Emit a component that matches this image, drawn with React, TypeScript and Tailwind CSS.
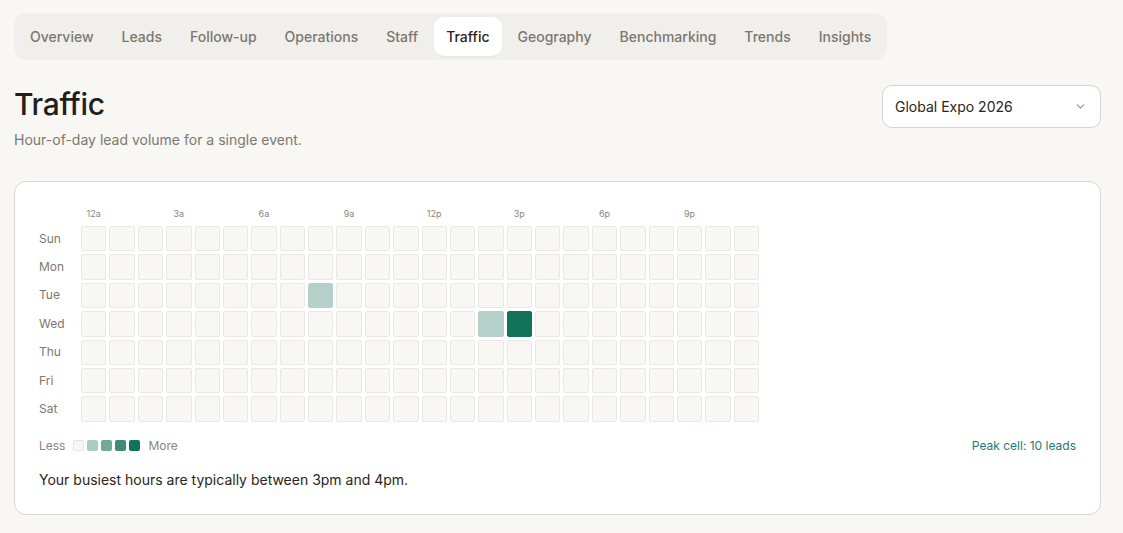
import React from "react";

const tabs = ["Overview", "Leads", "Follow-up", "Operations", "Staff", "Traffic", "Geography", "Benchmarking", "Trends", "Insights"];
const days = ["Sun", "Mon", "Tue", "Wed", "Thu", "Fri", "Sat"];
const hourLabels: Record<number, string> = { 0: "12a", 3: "3a", 6: "6a", 9: "9a", 12: "12p", 15: "3p", 18: "6p", 21: "9p" };

const cellColor = (d: number, h: number): string | null => {
  if (d === 2 && h === 8) return "bg-[#b4d0c9] border-[#b4d0c9]";
  if (d === 3 && h === 14) return "bg-[#b4d0c9] border-[#b4d0c9]";
  if (d === 3 && h === 15) return "bg-[#12735a] border-[#12735a]";
  return null;
};

export default function App() {
  return (
    <div className="min-h-[533px] bg-[#f8f7f4] pl-[14px] pr-[22px] pt-[13px] pb-4 text-[#2a2520]" style={{ fontFamily: "Inter, 'Noto Sans', sans-serif" }}>
      <div className="inline-flex gap-1 rounded-xl bg-[#f0efec] p-1">
        {tabs.map((t) => (
          <div
            key={t}
            className={
              "flex h-[39px] items-center rounded-[10px] px-3 text-[14px] font-medium " +
              (t === "Traffic" ? "bg-white text-[#2a2520] shadow-[0_1px_2px_rgba(0,0,0,0.04)]" : "text-[#7c776f]")
            }
          >
            {t}
          </div>
        ))}
      </div>

      <div className="mt-[26px] flex items-start justify-between">
        <div>
          <h1 className="text-[30px] font-medium leading-[36px] tracking-[-0.01em] text-[#221e1a]">Traffic</h1>
          <p className="mt-2 text-[14px] leading-5 text-[#7c776f]">Hour-of-day lead volume for a single event.</p>
        </div>
        <div className="-mt-px flex h-[43px] w-[219px] items-center justify-between rounded-[10px] border border-[#d6d3cd] bg-white pl-3 pr-[13px] text-[14px] text-[#2a2520]">
          <span>Global Expo 2026</span>
          <svg width="13" height="13" viewBox="0 0 24 24" fill="none" stroke="#9a958e" strokeWidth="2" strokeLinecap="round" strokeLinejoin="round">
            <path d="m6 9 6 6 6-6" />
          </svg>
        </div>
      </div>

      <div className="mt-[31px] rounded-xl border border-[#d9d6d0] bg-white px-6 pb-6 pt-6">
        <div className="w-[720px]">
          <div className="grid grid-cols-[39px_repeat(24,minmax(0,1fr))] gap-x-[3px]">
            <div />
            {Array.from({ length: 24 }).map((_, h) => (
              <div key={h} className="flex h-[14px] items-center justify-center text-[9px] leading-none text-[#8a857e]">
                {hourLabels[h] ?? ""}
              </div>
            ))}
          </div>
          <div className="mt-[6px] grid grid-cols-[39px_repeat(24,minmax(0,1fr))] gap-[3px]">
            {days.map((d, di) => (
              <React.Fragment key={d}>
                <div className="flex items-center text-[12px] text-[#7c776f]">{d}</div>
                {Array.from({ length: 24 }).map((_, h) => {
                  const c = cellColor(di, h);
                  return (
                    <div
                      key={h}
                      className={"aspect-square rounded-[2px] border " + (c ?? "border-[#ebe8e3] bg-[#f8f7f4]")}
                    />
                  );
                })}
              </React.Fragment>
            ))}
          </div>
        </div>

        <div className="mt-4 flex h-4 items-center justify-between text-[12px]">
          <div className="flex items-center gap-2 text-[#8a857e]">
            <span>Less</span>
            <div className="flex gap-[3px]">
              <div className="h-[11px] w-[11px] rounded-[2px] border border-[#e8e5df] bg-[#f8f7f4]" />
              <div className="h-[11px] w-[11px] rounded-[2px] bg-[#a8cdc3]" />
              <div className="h-[11px] w-[11px] rounded-[2px] bg-[#72aa9a]" />
              <div className="h-[11px] w-[11px] rounded-[2px] bg-[#428a76]" />
              <div className="h-[11px] w-[11px] rounded-[2px] bg-[#13735a]" />
            </div>
            <span>More</span>
          </div>
          <span className="text-[#1d7a78]">Peak cell: 10 leads</span>
        </div>

        <p className="mt-4 text-[14px] leading-5 text-[#2a2520]">Your busiest hours are typically between 3pm and 4pm.</p>
      </div>
    </div>
  );
}
